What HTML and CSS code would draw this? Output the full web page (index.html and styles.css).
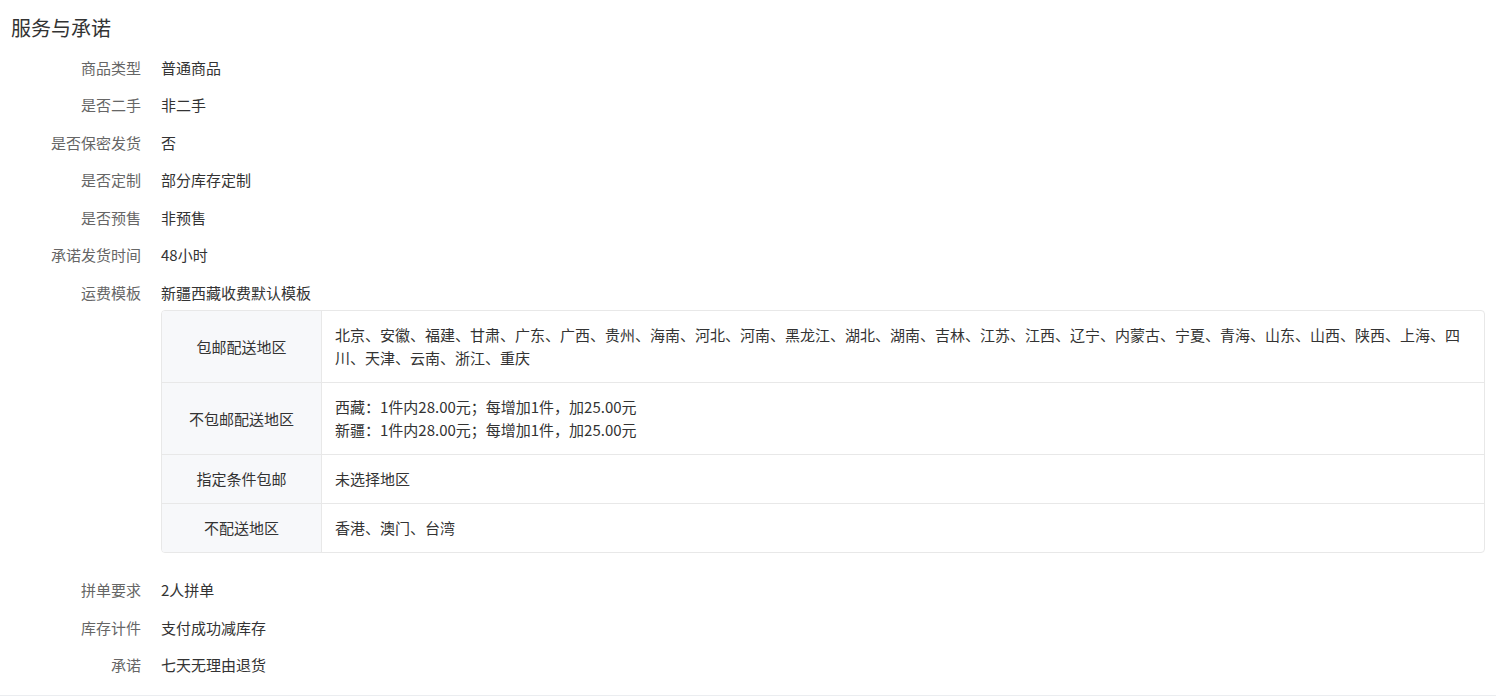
FILE: index.html
```html
<!DOCTYPE html>
<html lang="zh-CN">
<head>
    <meta charset="UTF-8">
    <meta name="viewport" content="width=device-width, initial-scale=1.0">
    <title>服务与承诺</title>
    <link rel="stylesheet" href="styles.css">
</head>
<body>

    <div class="seccion">
        <h2 class="titulo">服务与承诺</h2>

        <div class="fila"><span class="etiqueta">商品类型</span><span class="valor">普通商品</span></div>
        <div class="fila"><span class="etiqueta">是否二手</span><span class="valor">非二手</span></div>
        <div class="fila"><span class="etiqueta">是否保密发货</span><span class="valor">否</span></div>
        <div class="fila"><span class="etiqueta">是否定制</span><span class="valor">部分库存定制</span></div>
        <div class="fila"><span class="etiqueta">是否预售</span><span class="valor">非预售</span></div>
        <div class="fila"><span class="etiqueta">承诺发货时间</span><span class="valor">48小时</span></div>
        <div class="fila"><span class="etiqueta">运费模板</span><span class="valor">新疆西藏收费默认模板</span></div>

        <div class="tabla-envio">
            <div class="tabla-fila">
                <div class="tabla-label">包邮配送地区</div>
                <div class="tabla-valor">北京、安徽、福建、甘肃、广东、广西、贵州、海南、河北、河南、黑龙江、湖北、湖南、吉林、江苏、江西、辽宁、内蒙古、宁夏、青海、山东、山西、陕西、上海、四川、天津、云南、浙江、重庆</div>
            </div>
            <div class="tabla-fila">
                <div class="tabla-label">不包邮配送地区</div>
                <div class="tabla-valor">西藏：1件内28.00元；每增加1件，加25.00元<br>新疆：1件内28.00元；每增加1件，加25.00元</div>
            </div>
            <div class="tabla-fila">
                <div class="tabla-label">指定条件包邮</div>
                <div class="tabla-valor">未选择地区</div>
            </div>
            <div class="tabla-fila">
                <div class="tabla-label">不配送地区</div>
                <div class="tabla-valor">香港、澳门、台湾</div>
            </div>
        </div>

        <div class="fila"><span class="etiqueta">拼单要求</span><span class="valor">2人拼单</span></div>
        <div class="fila"><span class="etiqueta">库存计件</span><span class="valor">支付成功减库存</span></div>
        <div class="fila"><span class="etiqueta">承诺</span><span class="valor">七天无理由退货</span></div>
    </div>

</body>
</html>
```

FILE: styles.css
```css
body {
    font-family: "Noto Sans CJK SC", "Noto Sans", sans-serif;
    font-size: 15px;
    color: #333;
    margin: 0;
    background-color: #fff;
}
.seccion {
    padding: 14px 11px 11px 11px;
    border-bottom: 1px solid #ebedf0;
}
.titulo {
    margin: 0 0 7px 0;
    font-size: 20px;
    font-weight: normal;
    line-height: 28px;
    color: #333;
}
.fila {
    display: flex;
    align-items: center;
    height: 37.5px;
    line-height: 22.5px;
}
.etiqueta {
    width: 130px;
    text-align: right;
    color: #666;
    flex-shrink: 0;
}
.valor {
    margin-left: 20px;
    color: #333;
}
.tabla-envio {
    margin: -2px 0 19px 150px;
    border: 1px solid #e8e8e8;
    border-radius: 4px;
    overflow: hidden;
}
.tabla-fila {
    display: flex;
    border-bottom: 1px solid #e8e8e8;
}
.tabla-fila:last-child {
    border-bottom: none;
}
.tabla-label {
    width: 159px;
    flex-shrink: 0;
    background-color: #f7f8fa;
    border-right: 1px solid #e8e8e8;
    display: flex;
    align-items: center;
    justify-content: center;
    color: #333;
}
.tabla-valor {
    flex: 1;
    padding: 12.5px 13px;
    line-height: 23px;
    color: #333;
}
```
